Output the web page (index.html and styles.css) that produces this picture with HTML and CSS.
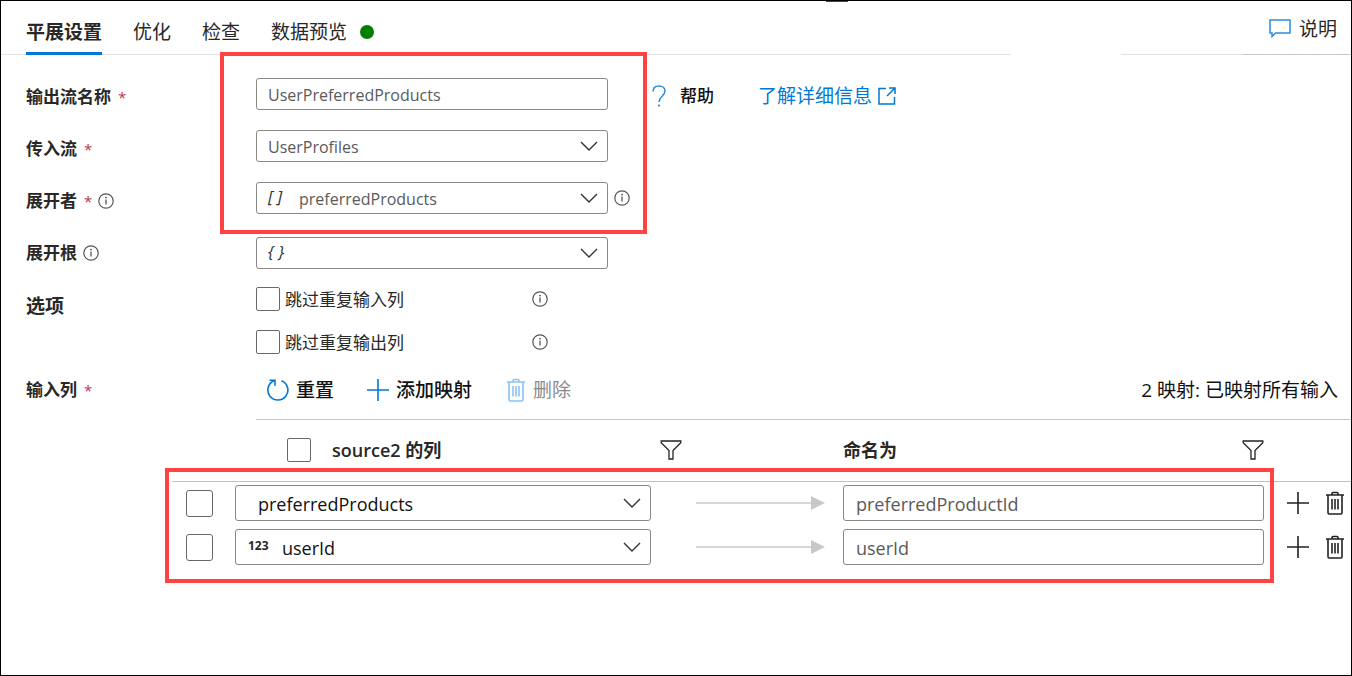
FILE: index.html
```html
<!DOCTYPE html>
<html lang="zh-CN">
<head>
<meta charset="utf-8">
<title>平展设置</title>
<link rel="stylesheet" href="styles.css">
</head>
<body>
<svg class="defs" aria-hidden="true">
  <symbol id="info" viewBox="0 0 16 16"><circle cx="8" cy="8" r="7.2" fill="none" stroke="currentColor" stroke-width="1.2"/><path d="M8 6.6v5" stroke="currentColor" stroke-width="1.3"/><circle cx="8" cy="4.6" r=".9" fill="currentColor"/></symbol>
  <symbol id="chevron" viewBox="0 0 18 10"><path d="M1 1l8 8 8-8" fill="none" stroke="currentColor" stroke-width="1.4"/></symbol>
  <symbol id="plus" viewBox="0 0 22 22"><path d="M11 0v22M0 11h22" stroke="currentColor" stroke-width="1.6"/></symbol>
  <symbol id="trash" viewBox="0 0 20 24"><path d="M1 4h18M3 4v17.500q0 1.500 1 1.500h12q1 0 1-1.500v-17.500M7 4v-1.500q0-1 1-1h4q1 0 1 1v1.500M7 8v10.500M10 8v10.500M13 8v10.500" fill="none" stroke="currentColor" stroke-width="1.6"/></symbol>
  <symbol id="filter" viewBox="0 0 22 20"><path d="M1.200 1h19.600v1.800l-7.800 7.700v8.500h-4v-8.500l-7.800-7.700z" fill="none" stroke="currentColor" stroke-width="1.3"/></symbol>
  <symbol id="arrow" viewBox="0 0 130 14"><path d="M0 7h116" stroke="currentColor" stroke-width="1.500"/><path d="M115 0l14 7-14 7z" fill="currentColor"/></symbol>
</svg>
<main class="panel">
  <header class="header">
    <nav class="tabs">
      <button class="tab tab-active" type="button">平展设置</button>
      <button class="tab" type="button">优化</button>
      <button class="tab" type="button">检查</button>
      <button class="tab" type="button">数据预览<span class="status-dot"></span></button>
    </nav>
    <span class="header-rule"></span>
    <div class="help">
      <button class="help-button" type="button"><svg class="icon-chat" viewBox="0 0 22 19"><path d="M1 1h20v13h-14.500l-3.500 3.500v-3.500h-2z" fill="none" stroke="currentColor" stroke-width="1.500"/></svg>说明</button>
    </div>
  </header>

  <form class="form">
    <div class="group">
      <div class="row">
        <label class="label" for="stream">输出流名称<span class="required">*</span></label>
        <div class="field"><input class="control" id="stream" type="text" value="UserPreferredProducts"></div>
        <div class="links">
          <button class="guide" type="button"><svg class="icon-question" viewBox="0 0 14 22"><path d="M1 6.500c0-3.500 2.500-5.500 6-5.500s6 2 6 5c0 5-6 5.500-6 11" fill="none" stroke="currentColor" stroke-width="1.500"/><circle cx="7" cy="20.600" r="1.100" fill="currentColor"/></svg>帮助</button>
          <a class="learn" href="#">了解详细信息<svg class="icon-external" viewBox="0 0 18 18"><path d="M8 1.500h-7v15.500h15.500v-7M11 1h6v6M17 1l-8 8" fill="none" stroke="currentColor" stroke-width="1.500"/></svg></a>
        </div>
      </div>
      <div class="row">
        <label class="label" for="incoming">传入流<span class="required">*</span></label>
        <div class="field">
          <select class="control" id="incoming"><option>UserProfiles</option></select>
          <svg class="chevron"><use href="#chevron"/></svg>
        </div>
      </div>
      <div class="row">
        <div class="label"><label for="unroll-by">展开者<span class="required">*</span></label><svg class="icon-info label-info"><use href="#info"/></svg></div>
        <div class="field">
          <span class="type-mark">[ ]</span>
          <select class="control control-typed" id="unroll-by"><option>preferredProducts</option></select>
          <svg class="chevron"><use href="#chevron"/></svg>
        </div>
        <svg class="icon-info field-info"><use href="#info"/></svg>
      </div>
      <span class="highlight highlight-fields"></span>
    </div>
    <div class="row row-root">
      <div class="label"><label for="unroll-root">展开根</label><svg class="icon-info label-info"><use href="#info"/></svg></div>
      <div class="field">
        <span class="type-mark">{ }</span>
        <select class="control control-typed" id="unroll-root"><option></option></select>
        <svg class="chevron"><use href="#chevron"/></svg>
      </div>
    </div>
    <div class="row row-options">
      <div class="label label-large">选项</div>
      <div class="options">
        <div class="option"><label class="option-label"><input class="check" type="checkbox"><span class="option-text">跳过重复输入列</span></label><svg class="icon-info"><use href="#info"/></svg></div>
        <div class="option"><label class="option-label"><input class="check" type="checkbox"><span class="option-text">跳过重复输出列</span></label><svg class="icon-info"><use href="#info"/></svg></div>
      </div>
    </div>
    <div class="row row-toolbar">
      <div class="label">输入列<span class="required">*</span></div>
      <div class="toolbar">
        <button class="tool" type="button"><svg class="icon-reset" viewBox="0 0 22 22"><path d="M14.500 1.700A10 10 0 1 1 7 1.800M2.500 1.200h5.500v5.500" fill="none" stroke="currentColor" stroke-width="1.600"/></svg>重置</button>
        <button class="tool tool-add" type="button"><svg class="icon-plus"><use href="#plus"/></svg>添加映射</button>
        <button class="tool tool-delete" type="button" disabled><svg class="icon-trash"><use href="#trash"/></svg>删除</button>
        <span class="summary">2 映射: 已映射所有输入</span>
      </div>
    </div>

    <div class="mapping">
      <table class="table">
        <colgroup><col class="col-check"><col class="col-source"><col class="col-arrow"><col><col class="col-actions"></colgroup>
        <thead>
          <tr>
            <th></th>
            <th><label class="head-check"><input class="check" type="checkbox">source2 的列</label></th>
            <th><button class="icon-button filter-source" type="button" aria-label="筛选"><svg class="icon-filter"><use href="#filter"/></svg></button></th>
            <th><div class="head-name">命名为<button class="icon-button" type="button" aria-label="筛选"><svg class="icon-filter"><use href="#filter"/></svg></button></div></th>
            <th></th>
          </tr>
        </thead>
        <tbody>
          <tr>
            <td><input class="check check-large" type="checkbox" aria-label="preferredProducts"></td>
            <td><div class="cell"><select class="control map-control map-select" aria-label="source2 的列"><option>preferredProducts</option></select><svg class="chevron"><use href="#chevron"/></svg></div></td>
            <td><svg class="arrow"><use href="#arrow"/></svg></td>
            <td><input class="control map-control" type="text" value="preferredProductId" aria-label="命名为"></td>
            <td><div class="actions"><button class="icon-button" type="button" aria-label="添加"><svg class="icon-plus"><use href="#plus"/></svg></button><button class="icon-button" type="button" aria-label="删除"><svg class="icon-trash"><use href="#trash"/></svg></button></div></td>
          </tr>
          <tr>
            <td><input class="check check-large" type="checkbox" aria-label="userId"></td>
            <td><div class="cell"><span class="number-mark">123</span><select class="control map-control map-select map-typed" aria-label="source2 的列"><option>userId</option></select><svg class="chevron"><use href="#chevron"/></svg></div></td>
            <td><svg class="arrow"><use href="#arrow"/></svg></td>
            <td><input class="control map-control" type="text" value="userId" aria-label="命名为"></td>
            <td><div class="actions"><button class="icon-button" type="button" aria-label="添加"><svg class="icon-plus"><use href="#plus"/></svg></button><button class="icon-button" type="button" aria-label="删除"><svg class="icon-trash"><use href="#trash"/></svg></button></div></td>
          </tr>
        </tbody>
      </table>
      <span class="highlight highlight-rows"></span>
    </div>
  </form>
</main>
</body>
</html>
```
FILE: styles.css
```css
* { box-sizing: border-box; }

body {
  margin: 0;
  background: #fff;
  color: #292827;
  font-family: "Open Sans", "Noto Sans CJK SC", sans-serif;
  font-size: 17px;
  line-height: 24px;
}

button, input, select { font: inherit; color: inherit; }
button { padding: 0; border: 0; background: none; }
svg { display: block; flex: none; }
.defs { position: absolute; width: 0; height: 0; }

.panel {
  position: relative;
  min-height: 100vh;
  border: 1px solid #000;
}
.panel::before {
  content: "";
  position: absolute;
  top: 0;
  left: 825px;
  width: 22px;
  height: 1px;
  background: #444;
}

/* Header */
.header {
  display: grid;
  grid-template-columns: minmax(0, 1fr) 122px 108px;
  height: 54px;
  font-size: 19px;
}
.tabs {
  display: flex;
  gap: 31px;
  margin-right: 111px;
  padding-left: 25px;
  border-bottom: 1px solid #e1e1e1;
}
.tab {
  position: relative;
  display: flex;
  align-items: center;
  gap: 13px;
  padding-top: 8px;
}
.tab-active { font-weight: 700; }
.tab-active::after {
  content: "";
  position: absolute;
  right: 0;
  bottom: -1px;
  left: 0;
  height: 3px;
  background: #0078d4;
}
.status-dot {
  width: 14px;
  height: 14px;
  border-radius: 50%;
  background: #008000;
}
.header-rule { border-bottom: 1px solid #e1e1e1; }
.help {
  display: flex;
  justify-content: flex-end;
  padding: 2px 14px 0 0;
  border-bottom: 1px solid #c8c8c8;
}
.help-button { display: flex; align-items: center; gap: 8px; }
.icon-chat { width: 22px; height: 19px; color: #2b8fdc; }

/* Form rows */
.group {
  position: relative;
  display: grid;
  gap: 20px;
  padding-top: 23px;
}
.row {
  display: grid;
  grid-template-columns: 230px 352px 1fr;
  align-items: center;
  padding-left: 25px;
}
.label {
  display: flex;
  align-items: center;
  padding-top: 5px;
  font-weight: 700;
}
.label-large { font-size: 19px; }
.required {
  margin-left: 7px;
  color: #c4314b;
  font-size: 15px;
  font-weight: 400;
}
.label-info { margin-left: 6px; }
.icon-info { width: 16px; height: 16px; color: #555; }
.field-info { margin-left: 6px; }

.field, .cell { position: relative; }
.control {
  display: block;
  width: 100%;
  height: 32px;
  padding: 1px 11px 0;
  border: 1px solid #8a8886;
  border-radius: 3px;
  background: #fff;
  color: #5a5a5a;
  font-size: 16px;
  appearance: none;
}
.control-typed { padding-left: 42px; }
.type-mark {
  position: absolute;
  top: 3px;
  left: 12px;
  color: #333;
  font-style: italic;
  font-size: 17px;
  font-weight: 500;
}
.chevron {
  position: absolute;
  top: 50%;
  right: 10px;
  width: 18px;
  height: 10px;
  margin-top: -5px;
  color: #333;
  pointer-events: none;
}
.links { display: flex; align-items: center; padding-top: 4px; }
.guide {
  display: flex;
  align-items: center;
  gap: 14px;
  margin-left: 44px;
  color: #111;
  font-weight: 500;
}
.icon-question { width: 14px; height: 22px; color: #2b8fdc; }
.learn {
  display: flex;
  align-items: center;
  gap: 6px;
  margin-left: 44px;
  color: #0078d4;
  font-size: 19px;
  text-decoration: none;
}
.icon-external { width: 18px; height: 18px; }

.row-root { margin-top: 23px; }
.row-root .label { padding-top: 0; }
.row-options { align-items: start; margin-top: 18px; }
.row-options .label { padding-top: 7px; }
.options { display: grid; gap: 19px; }
.option { display: flex; align-items: center; height: 24px; }
.option-label {
  display: flex;
  align-items: center;
  gap: 5px;
  width: 276px;
}
.option-text { padding-top: 2px; }
.check {
  flex: none;
  width: 24px;
  height: 24px;
  margin: 0;
  border: 1px solid #6b6967;
  border-radius: 2px;
  background: #fff;
  appearance: none;
}

/* Mapping toolbar */
.row-toolbar { grid-template-columns: 230px 1fr; }
.row-toolbar .label { padding-top: 5px; }
.toolbar {
  display: flex;
  align-items: center;
  height: 66px;
  padding: 7px 13px 0 11px;
  border-bottom: 1px solid #c8c8c8;
  color: #111;
  font-size: 19px;
}
.tool { display: flex; align-items: center; gap: 7px; font-weight: 500; }
.tool svg { color: #0078d4; }
.icon-reset { width: 22px; height: 22px; }
.icon-plus { width: 22px; height: 22px; }
.icon-trash { width: 20px; height: 24px; }
.tool-add { margin-left: 33px; }
.tool-delete { margin-left: 34px; color: #8a8a8a; font-weight: 400; }
.tool-delete svg { color: #8cc4f0; }
.summary { margin-left: auto; }

/* Mapping table */
.mapping { position: relative; padding-left: 171px; }
.table {
  width: 100%;
  table-layout: fixed;
  border-collapse: collapse;
}
.col-check { width: 63px; }
.col-source { width: 416px; }
.col-arrow { width: 192px; }
.col-actions { width: 87px; }
th {
  height: 61px;
  padding: 0;
  border-bottom: 1px solid #c0c0c0;
  font-size: 18px;
  font-weight: 600;
  text-align: left;
}
td { height: 44px; padding: 0; }
.head-check {
  display: flex;
  align-items: center;
  gap: 21px;
  padding-left: 52px;
}
.head-name {
  display: flex;
  align-items: center;
  justify-content: space-between;
}
.icon-filter { width: 22px; height: 20px; }
.icon-button { display: block; color: #222; }
.filter-source { margin-left: 9px; }
.check-large {
  display: block;
  width: 27px;
  height: 27px;
  margin-left: 14px;
  border-radius: 3px;
}
.map-control { height: 36px; padding: 1px 12px 0; font-size: 18px; }
.map-select { padding-left: 22px; color: #111; }
.map-typed { padding-left: 46px; }
.number-mark {
  position: absolute;
  top: 5px;
  left: 13px;
  font-size: 12px;
  font-weight: 700;
}
.arrow { width: 130px; height: 14px; margin-left: 45px; color: #c8c8c8; }
.actions {
  display: flex;
  justify-content: space-between;
  padding: 0 6px 0 23px;
}

/* Callout frames */
.highlight {
  position: absolute;
  border: 4px solid #ff4343;
  pointer-events: none;
}
.highlight-fields { top: -3px; bottom: -20px; left: 219px; width: 427px; }
.highlight-rows { top: 48px; right: 77px; bottom: -14px; left: 164px; }
```
